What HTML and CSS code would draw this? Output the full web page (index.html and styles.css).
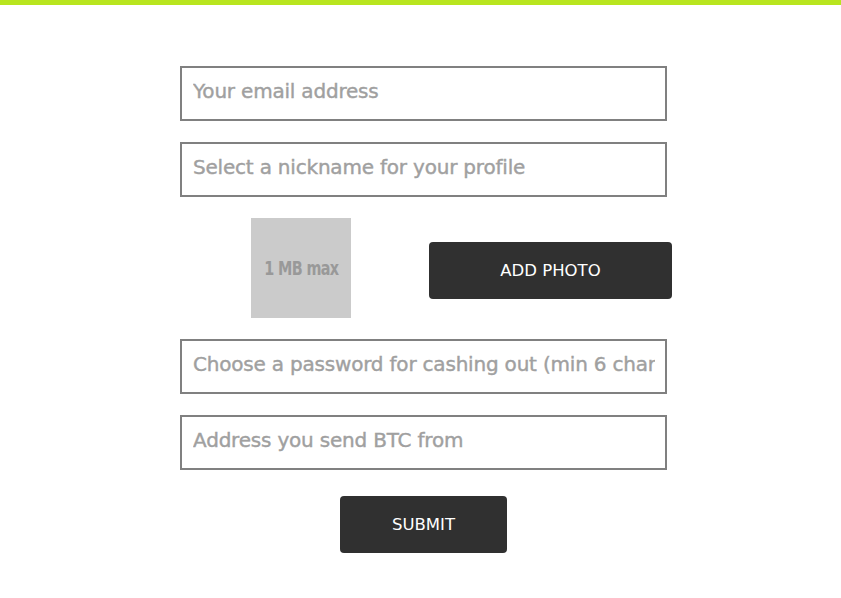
FILE: index.html
```html
<!DOCTYPE html>
<html lang="en">
<head>
    <meta charset="UTF-8">
    <title>Sign up</title>
    <link rel="stylesheet" href="styles.css">
</head>
<body>

<div class="topbar"></div>

<div class="container">
    <form id="signupForm">
        <input type="email" class="field" placeholder="Your email address">
        <input type="text" class="field" placeholder="Select a nickname for your profile">

        <!-- photo upload row -->
        <div class="photo-row">
            <div class="photo-box"><span>1 MB max</span></div>
            <button type="button" class="btn btn-photo">ADD PHOTO</button>
        </div>

        <input type="password" class="field" placeholder="Choose a password for cashing out (min 6 characters)">
        <input type="text" class="field" placeholder="Address you send BTC from">

        <div class="submit-row">
            <button type="submit" class="btn btn-submit">SUBMIT</button>
        </div>
    </form>
</div>

</body>
</html>
```

FILE: styles.css
```css
body {
    margin: 0;
    font-family: "DejaVu Sans", Verdana, sans-serif;
    background-color: #fff;
}
.topbar {
    height: 5px;
    background-color: #b8e51f;
}
.container {
    width: 487px;
    margin-left: 180px;
    padding-top: 61px;
}
form {
    display: flex;
    flex-direction: column;
}
.field {
    box-sizing: border-box;
    width: 487px;
    height: 55px;
    margin: 0 0 21px 0;
    padding: 0 10px 5px 11px;
    border: 2px solid #808080;
    font-family: "DejaVu Sans", Verdana, sans-serif;
    font-size: 20px;
    letter-spacing: -0.2px;
    color: #333;
    outline: none;
}
.field::placeholder {
    color: #a0a0a0;
    -webkit-text-stroke: 0.4px #a0a0a0;
}
.photo-row {
    display: flex;
    align-items: center;
    padding-left: 71px;
    margin: 0 0 21px 0;
}
.photo-box {
    flex-shrink: 0;
    width: 100px;
    height: 100px;
    background-color: #cbcbcb;
    color: #999;
    font-family: "DejaVu Sans Condensed", "DejaVu Sans", sans-serif;
    font-weight: bold;
    font-size: 20px;
    display: flex;
    align-items: center;
    justify-content: center;
}
.photo-box span {
    display: inline-block;
    white-space: nowrap;
    letter-spacing: -0.8px;
    transform: scaleX(0.8);
}
.btn {
    flex-shrink: 0;
    background-color: #303030;
    color: #fff;
    border: none;
    border-radius: 4px;
    font-family: "DejaVu Sans", Verdana, sans-serif;
    font-size: 16.5px;
    cursor: pointer;
}
.btn-photo {
    width: 243px;
    height: 57px;
    margin-left: 78px;
    margin-top: 4px;
}
.submit-row {
    display: flex;
    justify-content: center;
    margin-top: 5px;
}
.btn-submit {
    width: 167px;
    height: 57px;
}
```
